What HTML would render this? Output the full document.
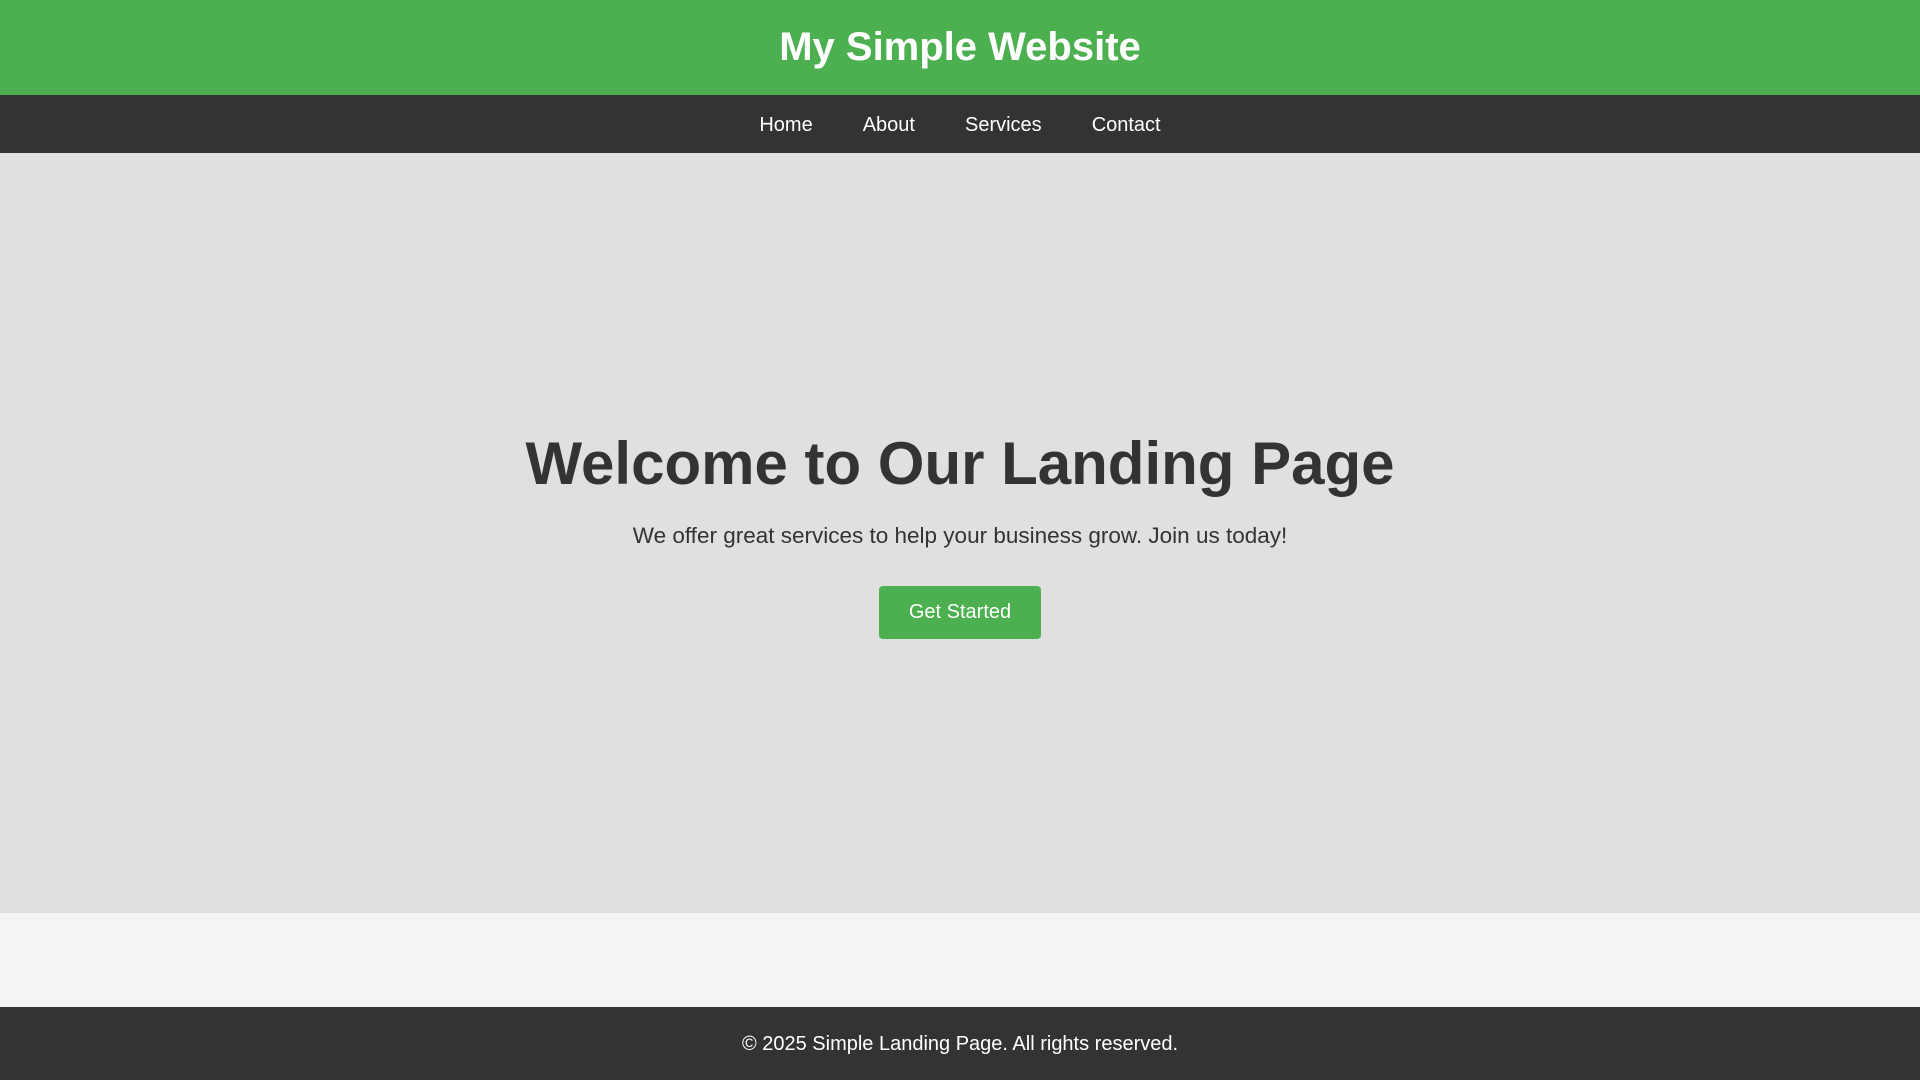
<!DOCTYPE html>
<html><head><meta charset="utf-8"><style>
*{margin:0;padding:0;box-sizing:border-box}
body{width:1920px;height:1080px;background:#f4f4f4;font-family:"Liberation Sans",Arial,sans-serif;position:relative;overflow:hidden}
header{position:absolute;top:0;left:0;width:1920px;height:95px;background:#4CAF50;color:#fff;display:flex;align-items:center;justify-content:center}
header h1{font-size:40px;font-weight:bold}
nav{position:absolute;top:95px;left:0;width:1920px;height:58px;background:#333;display:flex;align-items:center;justify-content:center;padding-top:2px}
nav a{color:#fff;text-decoration:none;font-size:20px;margin:0 25px}
.hero{position:absolute;top:153px;left:0;width:1920px;height:760px;background:#e0e0e0;color:#333;text-align:center}
.hero h2{position:absolute;top:276px;width:100%;font-size:60px;font-weight:bold;line-height:70px}
.hero p{position:absolute;top:368px;width:100%;font-size:22.5px;line-height:30px}
.btn{position:absolute;top:433px;left:879px;width:162px;height:53px;background:#4CAF50;color:#fff;font-size:20px;line-height:53px;border-radius:4px}
footer{position:absolute;top:1007px;left:0;width:1920px;height:73px;background:#333;color:#fff;font-size:20px;display:flex;align-items:center;justify-content:center;padding-top:2px}
</style></head><body>
<header><h1>My Simple Website</h1></header>
<nav><a>Home</a><a>About</a><a>Services</a><a>Contact</a></nav>
<div class="hero"><h2>Welcome to Our Landing Page</h2><p>We offer great services to help your business grow. Join us today!</p><div class="btn">Get Started</div></div>
<footer>© 2025 Simple Landing Page. All rights reserved.</footer>
</body></html>
